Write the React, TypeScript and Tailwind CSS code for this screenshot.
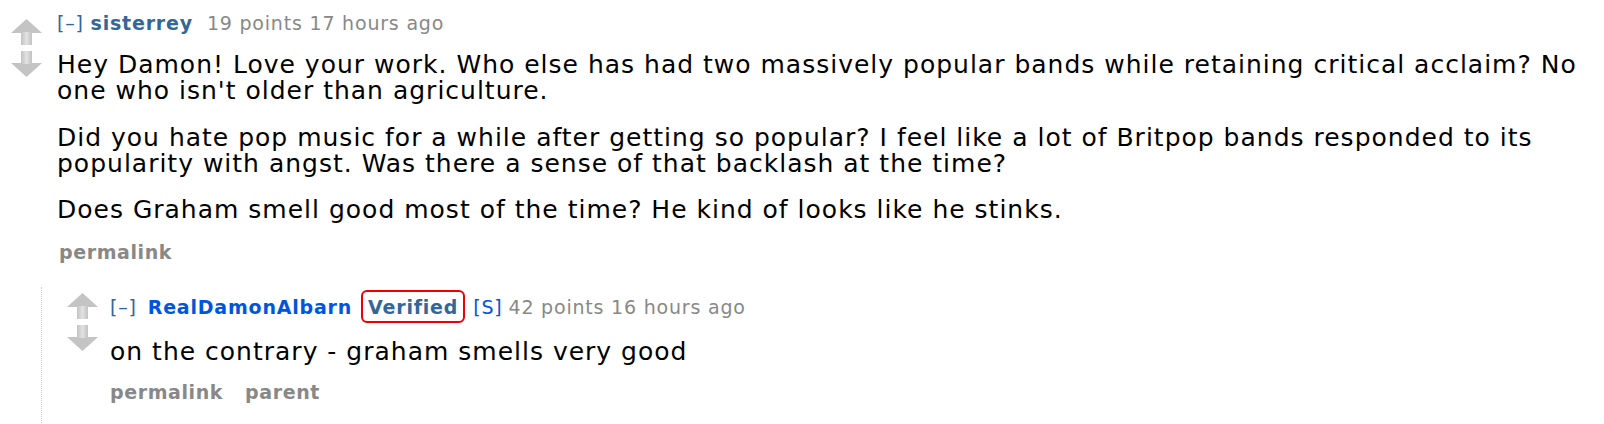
import React from "react";

function Arrow({ down = false }: { down?: boolean }) {
  return (
    <svg width="31" height="26" viewBox="0 0 31 26" className={down ? "rotate-180" : ""}>
      <defs>
        <linearGradient id={down ? "gd" : "gu"} x1="0" y1="0" x2="1" y2="0">
          <stop offset="0" stopColor="#c2c2c2" />
          <stop offset="0.5" stopColor="#e2e2e2" />
          <stop offset="1" stopColor="#c2c2c2" />
        </linearGradient>
      </defs>
      <polygon points="15.5,0 0,14 31,14" fill="#c4c4c4" />
      <rect x="10" y="13" width="11" height="13" fill={`url(#${down ? "gd" : "gu"})`} />
    </svg>
  );
}

function Arrows() {
  return (
    <div className="flex flex-col items-center gap-[6px]">
      <Arrow />
      <Arrow down />
    </div>
  );
}

export default function App() {
  return (
    <div className="w-[1604px] h-[424px] overflow-hidden bg-white font-['DejaVu_Sans',Verdana,sans-serif] text-black">
      <div className="flex flex-col">
        <div className="flex">
          <div className="w-[57px] flex justify-start pl-[11px] pt-[19px]">
            <Arrows />
          </div>
          <div className="flex flex-col pt-[10px]">
            <div className="text-[19px] leading-[26px] tracking-[0.8px] text-[#888]">
              <span className="text-[#369]">[–]</span>{" "}
              <span className="font-bold text-[#369]">sisterrey</span>
              <span className="ml-[14px]">19 points 17 hours ago</span>
            </div>
            <div className="mt-[16px] w-[1545px] text-[25px] leading-[26px] tracking-[1px]">
              <p>
                Hey Damon! Love your work. Who else has had two massively popular bands while retaining critical acclaim? No one who isn't older than agriculture.
              </p>
              <p className="mt-[21px]">
                Did you hate pop music for a while after getting so popular? I feel like a lot of Britpop bands responded to its popularity with angst. Was there a sense of that backlash at the time?
              </p>
              <p className="mt-[20px]">
                Does Graham smell good most of the time? He kind of looks like he stinks.
              </p>
            </div>
            <div className="mt-[16px] pl-[2px] text-[19px] leading-[26px] tracking-[0.6px] font-bold text-[#888]">permalink</div>
          </div>
        </div>
        <div className="ml-[41px] mt-[22px] border-l border-dotted border-[#c8c8ee] pl-[13px] pb-[20px] flex">
          <div className="w-[55px] pt-[6px]">
            <Arrows />
          </div>
          <div className="flex flex-col pt-[3px]">
            <div className="flex items-center text-[19px] leading-[26px] tracking-[0.8px] text-[#888]">
              <span className="text-[#369]">[–]</span>
              <span className="ml-[11px] font-bold text-[#0055df]">RealDamonAlbarn</span>
              <span className="ml-[9px] flex h-[33px] items-center rounded-[6px] border-2 border-[#e00] px-[5px] font-bold text-[#336699]">Verified</span>
              <span className="ml-[8px] text-[#0055df]">[S]</span>
              <span className="ml-[6px]">42 points 16 hours ago</span>
            </div>
            <div className="mt-[16px] text-[25px] leading-[26px] tracking-[1px]">on the contrary - graham smells very good</div>
            <div className="mt-[14px] flex gap-[22px] text-[19px] leading-[26px] tracking-[0.6px] font-bold text-[#888]">
              <span>permalink</span>
              <span>parent</span>
            </div>
          </div>
        </div>
      </div>
    </div>
  );
}
